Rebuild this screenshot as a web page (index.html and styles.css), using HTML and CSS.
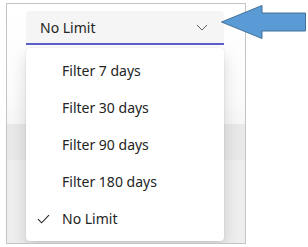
FILE: index.html
```html
<!DOCTYPE html>
<html>
<head>
    <title>Date filter dropdown</title>
    <link rel="stylesheet" href="styles.css">
</head>
<body>
    <div class="frame">
        <div class="backdrop-band"></div>
        <div class="dropdown">
            <span class="dropdown-value">No Limit</span>
            <svg class="chevron" width="12" height="7" viewBox="0 0 12 7">
                <path d="M1 1 L6 6 L11 1" fill="none" stroke="#616161" stroke-width="1"/>
            </svg>
        </div>
        <ul class="menu">
            <li class="menu-item"><span class="check"></span>Filter 7 days</li>
            <li class="menu-item"><span class="check"></span>Filter 30 days</li>
            <li class="menu-item"><span class="check"></span>Filter 90 days</li>
            <li class="menu-item"><span class="check"></span>Filter 180 days</li>
            <li class="menu-item selected">
                <span class="check">
                    <svg width="13" height="10" viewBox="0 0 13 10">
                        <path d="M1 5.2 L4.6 8.8 L12 1.2" fill="none" stroke="#242424" stroke-width="1.1"/>
                    </svg>
                </span>No Limit
            </li>
        </ul>
    </div>

    <!-- callout arrow pointing at the dropdown -->
    <svg class="callout" width="90" height="38" viewBox="0 0 90 38">
        <path d="M1.5 18 L42 1.5 L42 9 L85.5 9 L85.5 27 L42 27 L42 34.5 Z"
              fill="#5b9bd5" stroke="#41719c" stroke-width="1"/>
    </svg>
</body>
</html>
```

FILE: styles.css
```css
body {
    margin: 0;
    font-family: "Noto Sans", "Open Sans", sans-serif;
    background: #ffffff;
    position: relative;
}
.frame {
    position: relative;
    margin: 3px 0 0 6px;
    width: 240px;
    height: 241px;
    box-sizing: border-box;
    border: 1px solid #c4c4c4;
    padding: 7px 0 0 19px;
    background: linear-gradient(180deg, #ffffff 0px, #fbfbfb 90px, #f6f6f6 120px, #eeeeee 121px, #eeeeee 100%);
    overflow: hidden;
}
.backdrop-band {
    position: absolute;
    left: 0;
    right: 0;
    top: 120px;
    height: 36px;
    background: #e8e8e8;
}
.dropdown {
    position: relative;
    width: 198px;
    height: 34px;
    box-sizing: border-box;
    background: #f5f5f5;
    border-radius: 4px 4px 0 0;
    border-bottom: 2px solid #5b5fc7;
    display: flex;
    align-items: center;
    justify-content: space-between;
    padding: 0 16px 0 14px;
    color: #242424;
    font-size: 14px;
}
.chevron {
    margin-top: 1px;
}
.menu {
    position: relative;
    list-style: none;
    margin: 3px 0 0 0;
    padding: 4px 0;
    width: 198px;
    background: #ffffff;
    border-radius: 4px;
    box-shadow: 0 0 2px rgba(0,0,0,0.12), 0 8px 16px rgba(0,0,0,0.14);
}
.menu-item {
    height: 37px;
    display: flex;
    align-items: center;
    padding-left: 11px;
    font-size: 14px;
    color: #242424;
}
.check {
    width: 25px;
    display: flex;
    align-items: center;
}
.callout {
    position: absolute;
    left: 220px;
    top: 4px;
}
```
